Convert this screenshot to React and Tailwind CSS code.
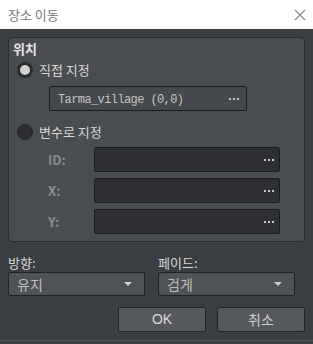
import React from 'react';

const kr = { fontFamily: '"Noto Sans CJK KR", "Noto Sans", sans-serif' };
const mono = { fontFamily: '"Liberation Mono", "DejaVu Sans Mono", monospace' };

const Dots = () => (
  <span className="flex gap-[2px]">
    <span className="w-[2px] h-[2px] bg-[#c8c8c8]" />
    <span className="w-[2px] h-[2px] bg-[#c8c8c8]" />
    <span className="w-[2px] h-[2px] bg-[#c8c8c8]" />
  </span>
);

const Field = ({ children, className = '' }) => (
  <div className={`flex items-center justify-between h-[25px] border border-[#1c1d1f] bg-[#2e3033] rounded-[2px] pl-2 pr-[5px] ${className}`}>
    <span className="text-[#a8a8a8] text-[13px]">{children}</span>
    <Dots />
  </div>
);

const Select = ({ value }) => (
  <div className="flex items-center justify-between h-[24px] border border-[#1f2123] bg-[#4f5256] rounded-[2px] pl-2 pr-3">
    <span className="text-[#bdbdbd] text-[14px]">{value}</span>
    <span className="w-0 h-0 border-l-[4px] border-r-[4px] border-t-[4px] border-l-transparent border-r-transparent border-t-[#cfcfcf]" />
  </div>
);

export default function App() {
  return (
    <div className="w-[313px] h-[344px] bg-[#3a3d41] flex flex-col overflow-hidden" style={kr}>
      <div className="h-[29px] bg-white flex items-center justify-between pl-2 pr-[6px]">
        <span className="text-[13px] text-[#777]">장소 이동</span>
        <svg width="12" height="12" viewBox="0 0 12 12" className="mr-[1px]">
          <path d="M1 1 L11 11 M11 1 L1 11" stroke="#888" strokeWidth="1.1" />
        </svg>
      </div>
      <div className="px-2 pt-2 flex flex-col flex-1">
        <div className="h-[205px] border border-[#2a2c2f] bg-[#494c50] rounded-[4px] pl-1 pr-6 pt-[3px]">
          <div className="text-[13px] font-bold text-[#e6e6e6] leading-[16px]">위치</div>
          <div className="flex items-center gap-[6px] mt-[3px] ml-[4px] h-[20px]">
            <span className="w-[16px] h-[16px] rounded-full bg-[#d2d2d2] border-[3px] border-[#2a2b2d]" />
            <span className="text-[13px] text-[#d8d8d8]">직접 지정</span>
          </div>
          <Field className="ml-[36px] mt-[6px] w-[198px] bg-[#45484c] !pr-[7px]">
            <span style={mono} className="text-[12px] tracking-[-0.6px] text-[#c4c4c4]">Tarma_village (0,0)</span>
          </Field>
          <div className="flex items-center gap-[6px] mt-[11px] ml-[4px] h-[20px]">
            <span className="w-[16px] h-[16px] rounded-full bg-[#2c2e31] border border-[#232426]" />
            <span className="text-[13px] text-[#d8d8d8]">변수로 지정</span>
          </div>
          <div className="grid grid-cols-[46px_1fr] gap-y-[6px] mt-[5px] ml-[35px] items-center">
            <span className="text-[13px] text-[#8a8c8f] font-bold">ID:</span>
            <Field />
            <span className="text-[13px] text-[#8a8c8f] font-bold">X:</span>
            <Field />
            <span className="text-[13px] text-[#8a8c8f] font-bold">Y:</span>
            <Field />
          </div>
        </div>
        <div className="grid grid-cols-2 gap-[13px] mt-[12px] pr-[10px]">
          <div className="flex flex-col">
            <span className="text-[13px] text-[#d6d6d6] leading-[18px]">방향:</span>
            <Select value="유지" />
          </div>
          <div className="flex flex-col">
            <span className="text-[13px] text-[#d6d6d6] leading-[18px]">페이드:</span>
            <Select value="검게" />
          </div>
        </div>
        <div className="flex justify-end gap-[11px] mt-[11px] pr-0">
          <button className="w-[88px] h-[25px] bg-[#55585c] border border-[#222426] rounded-[2px] text-[14px] text-[#dcdcdc]" style={{ fontFamily: '"Liberation Sans", "Noto Sans CJK KR", sans-serif' }}>OK</button>
          <button className="w-[88px] h-[25px] bg-[#55585c] border border-[#222426] rounded-[2px] text-[14px] text-[#d0d0d0]">취소</button>
        </div>
        <div className="mt-auto -mx-2 h-[4px] border-t border-[#55585c]" />
      </div>
    </div>
  );
}
